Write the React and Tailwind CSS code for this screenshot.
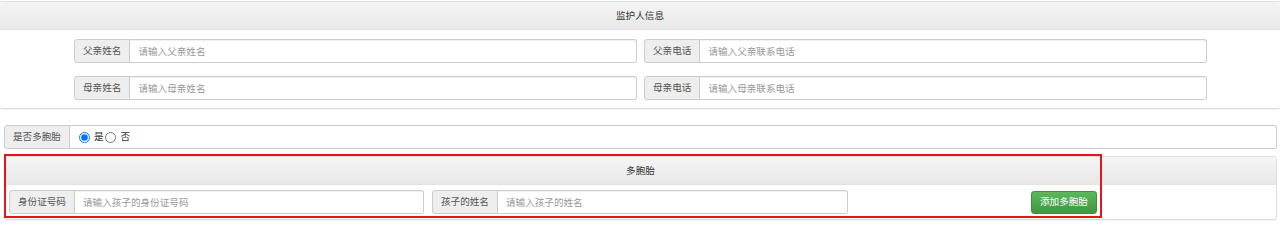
import React from "react";

const font = { fontFamily: '"Noto Sans CJK SC", "Noto Sans", sans-serif' };

function InputGroup({ label, placeholder, className }) {
  return (
    <div className={"flex h-[24px] " + (className || "")}>
      <span className="flex items-center px-[8px] bg-[#eee] border border-[#ccc] rounded-l-[3px] text-[#555] whitespace-nowrap">
        {label}
      </span>
      <input
        className="flex-1 min-w-0 h-full px-[8px] bg-white border border-l-0 border-[#ccc] rounded-r-[3px] text-[#555] placeholder:text-[#999] outline-none shadow-[inset_0_1px_1px_rgba(0,0,0,0.06)]"
        placeholder={placeholder}
      />
    </div>
  );
}

function PanelHeading({ children }) {
  return (
    <div className="h-[28px] flex items-center justify-center bg-gradient-to-b from-[#f5f5f5] to-[#e8e8e8] border-b border-[#e3e3e3] text-[#333]">
      {children}
    </div>
  );
}

export default function App() {
  return (
    <div
      className="relative w-[1280px] h-[241px] bg-white text-[9.6px] leading-none overflow-hidden"
      style={font}
    >
      {/* 监护人信息 */}
      <div className="mt-px -mx-px border border-[#ddd] rounded-[3px] bg-white shadow-[0_1px_1px_rgba(0,0,0,0.05)]">
        <PanelHeading>监护人信息</PanelHeading>
        <div className="pt-[9px] pb-[8px] pl-[74px] grid grid-cols-[563px_563px] gap-x-[7px] gap-y-[13px]">
          <InputGroup label="父亲姓名" placeholder="请输入父亲姓名" />
          <InputGroup label="父亲电话" placeholder="请输入父亲联系电话" />
          <InputGroup label="母亲姓名" placeholder="请输入母亲姓名" />
          <InputGroup label="母亲电话" placeholder="请输入母亲联系电话" />
        </div>
      </div>

      {/* 是否多胞胎 */}
      <div className="mt-[16px] ml-[4px] mr-[3px] flex h-[24px]">
        <span className="flex items-center px-[8px] bg-[#eee] border border-[#ccc] rounded-l-[3px] text-[#555] whitespace-nowrap">
          是否多胞胎
        </span>
        <div className="flex-1 flex items-center pl-[9px] bg-white border border-l-0 border-[#ccc] rounded-r-[3px] text-[#333]">
          <label className="flex items-center">
            <input type="radio" name="multi" defaultChecked className="w-[11px] h-[11px] m-0" />
            <span className="ml-[4px]">是</span>
          </label>
          <label className="flex items-center ml-[1px]">
            <input type="radio" name="multi" className="w-[11px] h-[11px] m-0" />
            <span className="ml-[5px]">否</span>
          </label>
        </div>
      </div>

      {/* 多胞胎 */}
      <div className="mt-[7px] ml-[4px] mr-[3px] border border-[#ddd] rounded-[3px] bg-white shadow-[0_1px_1px_rgba(0,0,0,0.05)]">
        <PanelHeading>多胞胎</PanelHeading>
        <div className="flex items-center pt-[5px] pb-[5px] pl-[4px]">
          <InputGroup className="w-[415px]" label="身份证号码" placeholder="请输入孩子的身份证号码" />
          <InputGroup className="w-[416px] ml-[8px]" label="孩子的姓名" placeholder="请输入孩子的姓名" />
          <button className="ml-[183px] h-[23px] px-[8px] rounded-[3px] border border-[#3e8f3e] bg-gradient-to-b from-[#5cb85c] to-[#419641] text-white whitespace-nowrap">
            添加多胞胎
          </button>
        </div>
      </div>

      {/* annotation box */}
      <div className="absolute left-[4px] top-[154px] w-[1098px] h-[64px] border-2 border-[#e8141c] pointer-events-none" />
    </div>
  );
}
